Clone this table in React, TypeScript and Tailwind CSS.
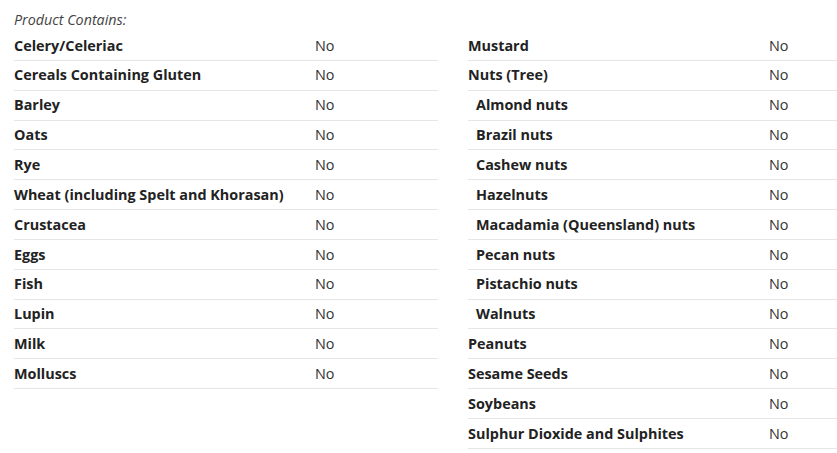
import React from "react";

type Row = { label: string; value: string; sub?: boolean };

const left: Row[] = [
  { label: "Celery/Celeriac", value: "No" },
  { label: "Cereals Containing Gluten", value: "No" },
  { label: "Barley", value: "No" },
  { label: "Oats", value: "No" },
  { label: "Rye", value: "No" },
  { label: "Wheat (including Spelt and Khorasan)", value: "No" },
  { label: "Crustacea", value: "No" },
  { label: "Eggs", value: "No" },
  { label: "Fish", value: "No" },
  { label: "Lupin", value: "No" },
  { label: "Milk", value: "No" },
  { label: "Molluscs", value: "No" },
];

const right: Row[] = [
  { label: "Mustard", value: "No" },
  { label: "Nuts (Tree)", value: "No" },
  { label: "Almond nuts", value: "No", sub: true },
  { label: "Brazil nuts", value: "No", sub: true },
  { label: "Cashew nuts", value: "No", sub: true },
  { label: "Hazelnuts", value: "No", sub: true },
  { label: "Macadamia (Queensland) nuts", value: "No", sub: true },
  { label: "Pecan nuts", value: "No", sub: true },
  { label: "Pistachio nuts", value: "No", sub: true },
  { label: "Walnuts", value: "No", sub: true },
  { label: "Peanuts", value: "No" },
  { label: "Sesame Seeds", value: "No" },
  { label: "Soybeans", value: "No" },
  { label: "Sulphur Dioxide and Sulphites", value: "No" },
];

function Table({ rows, className }: { rows: Row[]; className: string }) {
  return (
    <div className={className}>
      {rows.map((r) => (
        <div
          key={r.label}
          className="flex h-[29.85px] items-center border-b border-[#e6e6e6] box-border"
        >
          <div
            className={
              "w-[301px] shrink-0 font-bold text-[14.4px] text-[#222] " +
              (r.sub ? "pl-[8px]" : "")
            }
          >
            {r.label}
          </div>
          <div className="text-[14.4px] text-[#333]">{r.value}</div>
        </div>
      ))}
    </div>
  );
}

export default function App() {
  return (
    <div
      className="w-[837px] h-[453px] overflow-hidden bg-white pl-[14px]"
      style={{ fontFamily: '"Open Sans", sans-serif' }}
    >
      <div className="h-[31px] pt-[10px] text-[14.3px] italic text-[#444] leading-[20px]">
        Product Contains:
      </div>
      <div className="flex gap-[30px]">
        <Table rows={left} className="w-[424px] shrink-0" />
        <Table rows={right} className="flex-1" />
      </div>
    </div>
  );
}
